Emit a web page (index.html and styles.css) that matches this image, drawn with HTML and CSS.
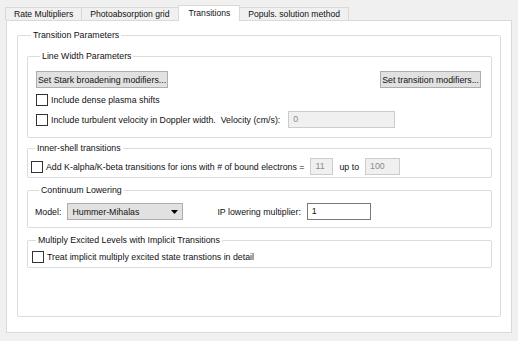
FILE: index.html
```html
<!DOCTYPE html>
<html lang="en">
<head>
  <meta charset="UTF-8">
  <title>Transitions</title>
  <link rel="stylesheet" href="styles.css">
</head>
<body>
  <div class="tabs">
    <div class="tab">Rate Multipliers</div>
    <div class="tab">Photoabsorption grid</div>
    <div class="tab active">Transitions</div>
    <div class="tab">Populs. solution method</div>
  </div>

  <div class="pane">
    <fieldset class="group outer">
      <legend>Transition Parameters</legend>

      <fieldset class="group linewidth">
        <legend>Line Width Parameters</legend>
        <div class="buttons">
          <button>Set Stark broadening modifiers...</button>
          <button>Set transition modifiers...</button>
        </div>
        <div class="row"><span class="check"></span>Include dense plasma shifts</div>
        <div class="row">
          <span class="check"></span>Include turbulent velocity in Doppler width.&nbsp; Velocity (cm/s):
          <span class="field disabled velocity">0</span>
        </div>
      </fieldset>

      <fieldset class="group innershell">
        <legend>Inner-shell transitions</legend>
        <div class="row">
          <span class="check"></span>Add K-alpha/K-beta transitions for ions with # of bound electrons =
          <span class="field disabled small">11</span>
          <span class="upto">up to</span>
          <span class="field disabled mid">100</span>
        </div>
      </fieldset>

      <fieldset class="group continuum">
        <legend>Continuum Lowering</legend>
        <div class="row">
          <span class="label">Model:</span>
          <span class="combo">Hummer-Mihalas
            <svg width="7" height="4" viewBox="0 0 7 4"><path d="M0 0H7L3.5 4Z" fill="#000"/></svg>
          </span>
          <span class="label ip">IP lowering multiplier:</span>
          <span class="field multiplier">1</span>
        </div>
      </fieldset>

      <fieldset class="group multiply">
        <legend>Multiply Excited Levels with Implicit Transitions</legend>
        <div class="row"><span class="check"></span>Treat implicit multiply excited state transtions in detail</div>
      </fieldset>
    </fieldset>
  </div>
</body>
</html>
```

FILE: styles.css
```css
body {
  margin: 0;
  background-color: #f0f0f0;
  font-family: 'Liberation Sans', Arial, sans-serif;
  font-size: 8.8px;
  color: #111;
}
.tabs {
  display: flex;
  align-items: flex-end;
  height: 20px;
  padding-left: 5px;
  font-size: 8.6px;
}
.tab {
  height: 12px;
  line-height: 12px;
  padding: 0 8px;
  border: 1px solid #d9d9d9;
  border-bottom: none;
  margin-left: -1px;
  background-color: #f0f0f0;
}
.tab:first-child {
  margin-left: 0;
}
.tab.active {
  height: 15px;
  line-height: 15px;
  padding: 0 9px 0 10px;
  margin-bottom: -1px;
  background-color: #fff;
  position: relative;
  z-index: 1;
}
.pane {
  margin: 0 6px 0 6px;
  height: 311px;
  background-color: #fff;
  border: 1px solid #d9d9d9;
}
.group {
  margin: 0;
  padding: 0;
  min-width: 0;
  border: 1px solid #dcdcdc;
  border-radius: 2px;
}
.group legend {
  padding: 0 2px;
  margin-left: 4px;
  line-height: 11px;
}
.outer {
  margin: 9px 10px 0 10px;
  height: 285px;
  padding: 0 8px 0 9px;
}
.outer .group {
  margin-top: 5px;
}
.outer .linewidth {
  margin-top: 10px;
}
.outer .continuum,
.outer .multiply {
  margin-top: 7px;
}
.linewidth {
  padding: 9px 10px 9px 8px;
}
.buttons {
  display: flex;
  justify-content: space-between;
  margin-bottom: 3px;
}
button {
  font: inherit;
  color: #111;
  height: 17px;
  padding: 0 1px;
  background-color: #e1e1e1;
  border: 1px solid #adadad;
}
.row {
  display: flex;
  align-items: center;
  height: 17px;
  margin-top: 3px;
  white-space: nowrap;
}
.check {
  width: 10px;
  height: 10px;
  border: 1px solid #333;
  background-color: #fff;
  margin-right: 3px;
}
.field {
  height: 15px;
  line-height: 15px;
  padding: 0 4px;
  border: 1px solid #7a7a7a;
  background-color: #fff;
}
.field.disabled {
  background-color: #f0f0f0;
  border-color: #cccccc;
  color: #8a8a8a;
}
.velocity {
  width: 97px;
  margin-left: 8px;
}
.innershell {
  padding: 4px 8px 2px 3px;
}
.innershell .row,
.continuum .row,
.multiply .row {
  margin-top: 0;
}
.small {
  width: 13px;
  margin-left: 6px;
}
.upto {
  margin: 0 6px;
}
.mid {
  width: 25px;
}
.continuum {
  padding: 7px 8px 7px 7px;
}
.combo {
  display: flex;
  align-items: center;
  justify-content: space-between;
  width: 106px;
  height: 15px;
  padding: 0 4px;
  margin-left: 6px;
  background-color: #e1e1e1;
  border: 1px solid #adadad;
}
.ip {
  margin-left: 34px;
}
.multiplier {
  width: 54px;
  margin-left: 6px;
}
.multiply {
  padding: 2px 8px 2px 4px;
}
```
